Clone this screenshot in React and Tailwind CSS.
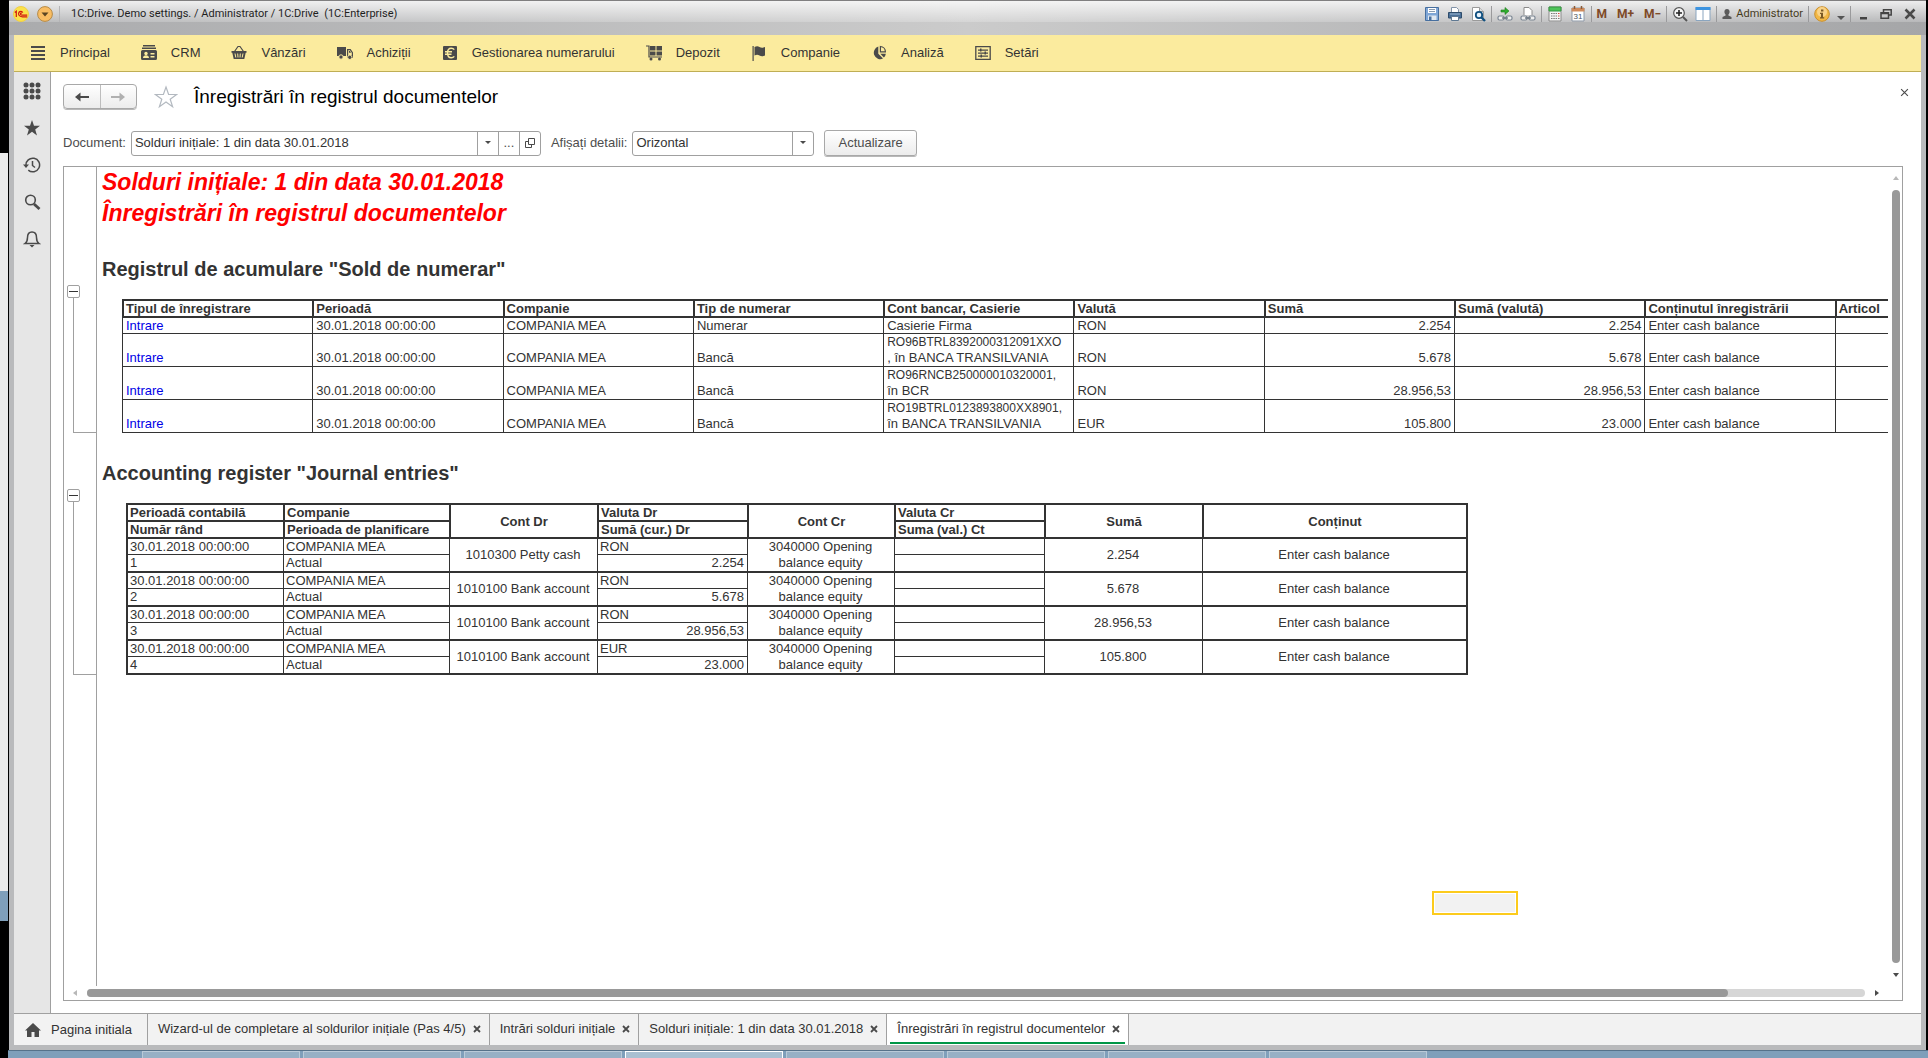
import React from 'react';

// --- Data ---

const menuItems = [
    { label: "Principal", icon: "lines" },
    { label: "CRM", icon: "card" },
    { label: "Vânzări", icon: "basket" },
    { label: "Achiziții", icon: "truck" },
    { label: "Gestionarea numerarului", icon: "euro" },
    { label: "Depozit", icon: "cart" },
    { label: "Companie", icon: "flag" },
    { label: "Analiză", icon: "pie" },
    { label: "Setări", icon: "sliders" },
];

const cashColumns = [
    "Tipul de înregistrare", "Perioadă", "Companie", "Tip de numerar", "Cont bancar, Casierie",
    "Valută", "Sumă", "Sumă (valută)", "Conținutul înregistrării", "Articol",
];

const cashRows = [
    { type: "Numerar", account: "Casierie Firma", currency: "RON", sum: "2.254", sumCur: "2.254" },
    { type: "Bancă", iban: "RO96BTRL8392000312091XXO", account: ", în BANCA TRANSILVANIA", currency: "RON", sum: "5.678", sumCur: "5.678" },
    { type: "Bancă", iban: "RO96RNCB250000010320001,", account: "în BCR", currency: "RON", sum: "28.956,53", sumCur: "28.956,53" },
    { type: "Bancă", iban: "RO19BTRL0123893800XX8901,", account: "în BANCA TRANSILVANIA", currency: "EUR", sum: "105.800", sumCur: "23.000" },
];

const journalRows = [
    { dr: "1010300 Petty cash", currency: "RON", sumCur: "2.254", sum: "2.254" },
    { dr: "1010100 Bank account", currency: "RON", sumCur: "5.678", sum: "5.678" },
    { dr: "1010100 Bank account", currency: "RON", sumCur: "28.956,53", sum: "28.956,53" },
    { dr: "1010100 Bank account", currency: "EUR", sumCur: "23.000", sum: "105.800" },
];

const tabs = [
    { label: "Wizard-ul de completare al soldurilor inițiale (Pas 4/5)" },
    { label: "Intrări solduri inițiale" },
    { label: "Solduri inițiale: 1 din data 30.01.2018" },
    { label: "Înregistrări în registrul documentelor", active: true },
];

// --- Icons ---

const menuIcons = {
    lines: <path d="M1 1h14v2H1zM1 5h14v2H1zM1 9h14v2H1zM1 13h14v2H1z" />,
    card: (
        <>
            <path d="M2 0h12v1.500H2zM1 2.500h14V4H1zM0 6.500Q0 5 1.500 5h13Q16 5 16 6.500v7q0 1.500-1.500 1.500h-13Q0 15 0 13.500z" />
            <g fill="#fbeb9e">
                <circle cx="5" cy="8.500" r="1.700" />
                <path d="M2 13c0-2 1.300-2.800 3-2.800S8 11 8 13zM9.500 8h4v1.500h-4zM9.500 11h4v1.500h-4z" />
            </g>
        </>
    ),
    basket: (
        <>
            <path d="M3.500 6.500 7 1.500h2l3.500 5" fill="none" stroke="#4a4a4a" strokeWidth="1.200" />
            <path d="M.5 6h15v1.800h-.8L13.300 14H2.700L1.300 7.800H.5z" />
            <path d="M4 8.500l.8 4M6.700 8.500l.300 4M9.300 8.500l-.3 4M12 8.500l-.8 4" stroke="#fbeb9e" strokeWidth="1" />
        </>
    ),
    truck: (
        <>
            <path d="M0 2h9v9H0z" />
            <path d="M10.600 4.600h2.700l2.100 3v4.800h-4.800z" fill="none" stroke="#4a4a4a" strokeWidth="1.200" />
            <path d="M12 6h1l1 1.800h-2zM10.500 10h5v2.500h-5z" />
            <circle cx="4" cy="12" r="2.200" stroke="#fbeb9e" />
            <circle cx="12.800" cy="12.300" r="2.200" stroke="#fbeb9e" />
        </>
    ),
    euro: (
        <>
            <path d="M1 2q0-1 1-1h12q1 0 1 1v12q0 1-1 1H2q-1 0-1-1z" />
            <path d="M12.300 4.600C11.500 3.600 10.600 3.200 9.300 3.200 7 3.200 5.500 5.200 5.500 8s1.500 4.800 3.800 4.800c1.300 0 2.200-.4 3-1.400M3 6.800h7M3 9.200h6.500" fill="none" stroke="#fbeb9e" strokeWidth="1.400" />
        </>
    ),
    cart: (
        <>
            <path d="M0 1h3v11h13" fill="none" stroke="#4a4a4a" strokeWidth="1.200" />
            <path d="M4 1h5.500v4.500H4zM10.500 1H16v4.500h-5.500zM4 6.500h5.500v4H4zM10.500 6.500H16v4h-5.500z" />
            <circle cx="5" cy="14" r="1.500" />
            <circle cx="13.500" cy="14" r="1.500" />
        </>
    ),
    flag: <path d="M1.500 1h1.200v15H1.500zM3.500 2c2-1 3.500-1 5 0s3.500 1 5.500 0v8.500c-2 1-4 1-5.500 0s-3-1.200-5 0z" />,
    pie: (
        <>
            <path d="M7.300 1.500v7.300l4.700 4.800A6.500 6.500 0 1 1 7.300 1.500z" />
            <path d="M9.400 1.500v5.300h5a5.400 5.400 0 0 0-5-5.300z" fill="none" stroke="#4a4a4a" strokeWidth="1.200" />
            <path d="M9.300 8.800h5.500a6 6 0 0 1-1.900 3.800z" />
        </>
    ),
    sliders: (
        <>
            <path d="M.8 1.700h14.400v12.600H.8z" fill="none" stroke="#4a4a4a" strokeWidth="1.300" />
            <path d="M3 4.500h10v1.200H3zM3 7.500h10v1.200H3zM3 10.500h10v1.200H3z" />
            <path d="M5 3.500h1.500v3H5zM9.500 6.500H11v3H9.500zM5.500 9.500H7v3H5.500z" />
        </>
    ),
};

const MenuIcon = ({ name }) => (
    <svg viewBox="0 0 16 16" className="w-4 h-4 shrink-0" fill="#4a4a4a">{menuIcons[name]}</svg>
);

const Triangle = ({ points, color }) => (
    <svg viewBox="0 0 6 6" className="w-1.5 h-1.5 shrink-0" fill={color}><polygon points={points} /></svg>
);

const CloseMark = ({ className, width }) => (
    <svg viewBox="0 0 8 8" className={className} fill="none" stroke="#4a4a4a" strokeWidth={width}>
        <path d="M1 1l6 6M7 1L1 7" />
    </svg>
);

const SaveIcon = () => (
    <svg viewBox="0 0 16 16" className="w-4 h-4">
        <path d="M1.500 1.500h13v13h-13z" fill="#7fa6d6" stroke="#476f9f" />
        <path d="M4 2h8v5H4z" fill="#fff" />
        <path d="M5 3.500h6M5 5.500h6" stroke="#8a9bb0" />
        <path d="M4 9.500h8.500V14H4z" fill="#dfe7f0" />
        <path d="M5 10.500h2.500V14H5z" fill="#476f9f" />
    </svg>
);

const PrintIcon = () => (
    <svg viewBox="0 0 16 16" className="w-4 h-4">
        <path d="M4.500 7V1.500h5l2 2V7z" fill="#fff" stroke="#8193a8" />
        <path d="M1.500 6.500h13V12h-13z" fill="#4a7099" stroke="#2e4c6b" />
        <path d="M3 8h10" stroke="#9fb9d3" />
        <path d="M4.500 10.500h7v4h-7z" fill="#fff" stroke="#5f7892" />
    </svg>
);

const PreviewIcon = () => (
    <svg viewBox="0 0 16 16" className="w-4 h-4">
        <path d="M2.500 1.500h7l4 4v9h-11z" fill="#fff" stroke="#9a9a9a" />
        <path d="M9.500 1.500v4h4" fill="#ddd" stroke="#9a9a9a" />
        <circle cx="9" cy="9" r="3.200" fill="#e8f2fa" stroke="#11507f" strokeWidth="1.800" />
        <path d="M11.500 11.500l3.500 3.500" stroke="#11507f" strokeWidth="2.400" />
    </svg>
);

const LinkIcon = ({ children }) => (
    <svg viewBox="0 0 16 16" className="w-4 h-4">
        {children}
        <rect x="1" y="10" width="6" height="4" rx="1.500" fill="#eee" stroke="#7c8794" strokeWidth="1.200" />
        <rect x="9" y="10" width="6" height="4" rx="1.500" fill="#eee" stroke="#7c8794" strokeWidth="1.200" />
        <path d="M5 12h6" stroke="#5d6874" strokeWidth="1.200" />
    </svg>
);

const CalculatorIcon = () => (
    <svg viewBox="0 0 16 16" className="w-4 h-4">
        <path d="M2 1h12v14H2z" fill="#f4f4f4" stroke="#8b8b8b" />
        <path d="M2 1h12v4H2z" fill="#4fc45a" stroke="#379642" />
        <path d="M4 7.500h6M4 10h6M4 12.500h6" stroke="#777" strokeDasharray="1.500 .8" />
        <path d="M11 7.500h1.500M11 10h1.500" stroke="#d9473a" />
        <path d="M11 12.500h1.500" stroke="#777" />
    </svg>
);

const CalendarIcon = () => (
    <svg viewBox="0 0 16 16" className="w-4 h-4">
        <path d="M2 2h12v13H2z" fill="#fff" stroke="#8d98a6" />
        <path d="M1.500 2h13v3.500h-13z" fill="#cf8a5b" />
        <path d="M4.500 0v3M11.500 0v3" stroke="#8d5a35" strokeWidth="1.500" />
        <text x="8" y="13" fontSize="8" textAnchor="middle" fill="#4a5560" fontFamily="Liberation Sans, sans-serif">31</text>
    </svg>
);

const ZoomIcon = () => (
    <svg viewBox="0 0 16 16" className="w-4 h-4">
        <circle cx="7" cy="7" r="5.300" fill="#f6f6f6" stroke="#555" strokeWidth="1.200" />
        <path d="M4 7h6M7 4v6" stroke="#222" strokeWidth="1.600" />
        <path d="M11 11l4 4" stroke="#555" strokeWidth="2" />
    </svg>
);

const PanelsIcon = () => (
    <svg viewBox="0 0 16 16" className="w-4 h-4">
        <path d="M1 1.500h14v13H1z" fill="#fff" stroke="#8aa5bf" />
        <path d="M.5 1h15v3H.5z" fill="#3d94e0" />
        <path d="M8 4v10.500" stroke="#8aa5bf" />
    </svg>
);

const UserIcon = () => (
    <svg viewBox="0 0 10 12" className="w-2.5 h-3" fill="#5b5b5b">
        <path d="M5 1c1.700 0 2.600 1.200 2.600 2.800C7.600 5 7.100 6 6.400 6.500v1L9.500 9v2h-9V9l3.100-1.500v-1C2.900 6 2.400 5 2.400 3.800 2.400 2.200 3.300 1 5 1z" />
    </svg>
);

const InfoIcon = () => (
    <svg viewBox="0 0 16 16" className="w-4 h-4">
        <circle cx="8" cy="8" r="7.300" fill="#f2b845" stroke="#c98f2c" />
        <circle cx="8" cy="6" r="5" fill="#f9d388" />
        <path d="M7 3.500h2.400v2H7zM6 6.800h3v4.400h1.200v1.300H6v-1.300h1V8H6z" fill="#7a5a26" />
    </svg>
);

// --- Window title ---

const Divider = () => <span className="w-px h-4 -mx-0.5 bg-[#9a9a9c]"></span>;

const ToolButton = ({ label, children }) => (
    <button type="button" aria-label={label} className="flex items-center justify-center h-4">{children}</button>
);

const TitleBar = () => (
    <header className="h-[35px] shrink-0 border-t border-[#807f80] bg-linear-to-r from-[#aaabad] via-[#cbcbcb] to-[#a5a6a8]">
        <div className="flex items-center justify-between h-[21px] px-1 bg-linear-to-b from-white/80 via-white/50 to-white/20 font-['Roboto',sans-serif] text-[11px] text-[#1f1f1f]">
            <div className="flex items-center pt-1">
                <svg viewBox="0 0 16 16" className="w-4 h-4" aria-hidden="true">
                    <circle cx="8" cy="8" r="7.500" fill="#fbe24b" stroke="#f0cf45" />
                    <path d="M1.800 6.500 3.300 5.300V11M9.800 6.600C9.200 5.400 8 5 6.800 5.600S5.200 8 6 9.300s2 1.500 3.500 1.500h4.700M9 7.300c-.8-.6-1.600-.2-1.500.8s.8 1.100 2 1.100h4.700" fill="none" stroke="#d3180f" strokeWidth="1.200" />
                </svg>
                <button type="button" aria-label="Meniu" className="ml-2">
                    <svg viewBox="0 0 16 16" className="w-4 h-4">
                        <circle cx="8" cy="8" r="7.400" fill="#f9bd63" stroke="#b58a48" />
                        <path d="M4.500 6.500h7L8 10.500z" fill="#5a4522" />
                    </svg>
                </button>
                <span className="w-px h-4 mx-1.5 bg-[#b5b5b7]"></span>
                <span className="ml-[5px] whitespace-pre">1C:Drive. Demo settings. / Administrator / 1C:Drive  (1C:Enterprise)</span>
            </div>
            <div className="flex items-center gap-[7px] pt-1">
                <ToolButton label="Salvare"><SaveIcon /></ToolButton>
                <ToolButton label="Tipărire"><PrintIcon /></ToolButton>
                <ToolButton label="Previzualizare"><PreviewIcon /></ToolButton>
                <Divider />
                <ToolButton label="Salt la link">
                    <LinkIcon><path d="M4 4h4V1.500L12 5 8 8.500V6H4z" fill="#2fae2f" stroke="#1d7a1d" strokeWidth=".6" /></LinkIcon>
                </ToolButton>
                <ToolButton label="Obținere link">
                    <LinkIcon><path d="M4 9V1.500h5L12 4.500V9" fill="#fff" stroke="#8a8a8a" /></LinkIcon>
                </ToolButton>
                <Divider />
                <ToolButton label="Calculator"><CalculatorIcon /></ToolButton>
                <ToolButton label="Calendar"><CalendarIcon /></ToolButton>
                <Divider />
                <div className="flex gap-2.5 font-bold text-xs text-[#7e4a28]">
                    <button type="button">M</button>
                    <button type="button">M+</button>
                    <button type="button">M−</button>
                </div>
                <Divider />
                <ToolButton label="Mărire"><ZoomIcon /></ToolButton>
                <ToolButton label="Panouri"><PanelsIcon /></ToolButton>
                <Divider />
                <button type="button" className="flex items-center gap-1 text-[#463b1c]">
                    <UserIcon />
                    Administrator
                </button>
                <Divider />
                <ToolButton label="Informații"><InfoIcon /></ToolButton>
                <ToolButton label="Opțiuni">
                    <svg viewBox="0 0 8 16" className="w-2 h-4" fill="#555"><path d="M0 10h8l-4 4z" /></svg>
                </ToolButton>
                <Divider />
                <div className="flex items-center gap-3 pl-1 pr-1.5">
                    <ToolButton label="Minimizare">
                        <svg viewBox="0 0 8 12" className="w-2 h-3" fill="#444"><path d="M0 9h7v2.500H0z" /></svg>
                    </ToolButton>
                    <ToolButton label="Restaurare">
                        <svg viewBox="0 0 12 12" className="w-3 h-3" fill="none" stroke="#444" strokeWidth="1.500">
                            <path d="M3.500 4V1.700h7.700V7H9M1 4.700h7.500v5.600H1zM1 5.500h7.500" />
                        </svg>
                    </ToolButton>
                    <ToolButton label="Închidere"><CloseMark className="w-3 h-3" width="1.700" /></ToolButton>
                </div>
            </div>
        </div>
    </header>
);

const MainMenu = () => (
    <nav className="flex items-center gap-[31px] h-[37px] shrink-0 pl-4 bg-[#fbeb9e] border-b border-[#bfae55]">
        {menuItems.map(item => (
            <a key={item.label} href="#" className="flex items-center gap-3.5 text-[#333]">
                <MenuIcon name={item.icon} />
                {item.label}
            </a>
        ))}
    </nav>
);

const SideBar = () => (
    <aside className="flex flex-col items-center gap-[19px] w-[37px] shrink-0 pt-2.5 bg-[#e6e6e6] border-r border-[#a0a0a0]">
        <button type="button" aria-label="Funcții">
            <svg viewBox="0 0 18 18" className="w-[18px] h-[18px]" fill="#4a4a4a">
                {[3, 9, 15].map(y => [3, 9, 15].map(x => <circle key={`${x}-${y}`} cx={x} cy={y} r="2.500" />))}
            </svg>
        </button>
        <button type="button" aria-label="Favorite">
            <svg viewBox="0 0 18 18" className="w-[18px] h-[18px]" fill="#4a4a4a">
                <path d="M9 1l2 5.700h6l-4.800 3.700 1.800 6L9 12.800 4 16.400l1.800-6L1 6.700h6z" />
            </svg>
        </button>
        <button type="button" aria-label="Istoric">
            <svg viewBox="0 0 18 18" className="w-[18px] h-[18px]" fill="none" stroke="#4a4a4a" strokeWidth="1.500">
                <path d="M3 9.500a6.800 6.800 0 1 1 2.300 4.600M9.500 5v4.500l2.500 2" />
                <path d="M0 8.500h6L3 12z" fill="#4a4a4a" stroke="none" />
            </svg>
        </button>
        <button type="button" aria-label="Căutare">
            <svg viewBox="0 0 18 18" className="w-[18px] h-[18px]" fill="none" stroke="#4a4a4a">
                <circle cx="7.500" cy="7" r="4.800" strokeWidth="1.600" />
                <path d="M11 11l5.500 5" strokeWidth="2.800" />
            </svg>
        </button>
        <button type="button" aria-label="Notificări">
            <svg viewBox="0 0 18 18" className="w-[18px] h-[18px]" fill="none" stroke="#4a4a4a" strokeWidth="1.500">
                <path d="M2 13.500c2-1.500 2.500-3 2.500-6C4.500 4 6.500 2 9 2s4.500 2 4.500 5.500c0 3 .5 4.500 2.500 6z" />
                <path d="M6.500 15h5L9 17.500z" fill="#4a4a4a" stroke="none" />
            </svg>
        </button>
    </aside>
);

// --- Form header ---

const FormHeader = () => (
    <div className="flex items-center">
        <div className="flex h-[25px] w-[74px] bg-linear-to-b from-white to-[#ececec] border border-[#a8a8a8] rounded-sm shadow-[0_1px_0_#b8b8b8]">
            <button type="button" aria-label="Înapoi" className="flex-1 flex items-center justify-center border-r border-[#bdbdbd]">
                <svg viewBox="0 0 16 12" className="w-4 h-3" fill="none" stroke="#4a4a4a" strokeWidth="2">
                    <path d="M15 6H3" /><path d="M6.500 1.500v9L1 6z" fill="#4a4a4a" stroke="none" />
                </svg>
            </button>
            <button type="button" aria-label="Înainte" className="flex-1 flex items-center justify-center">
                <svg viewBox="0 0 16 12" className="w-4 h-3" fill="none" stroke="#b0b0b0" strokeWidth="2">
                    <path d="M1 6h12" /><path d="M9.500 1.500v9L15 6z" fill="#b0b0b0" stroke="none" />
                </svg>
            </button>
        </div>
        <button type="button" aria-label="Adăugare la favorite" className="ml-[17px]">
            <svg viewBox="0 0 24 24" className="w-6 h-6" fill="none" stroke="#b3b9c0" strokeWidth="1.200">
                <path d="M12 2l2.600 7.500h8l-6.400 4.700 2.400 7.600-6.600-4.700-6.600 4.700 2.400-7.600L1.400 9.500h8z" />
            </svg>
        </button>
        <h1 className="ml-4 text-[19px] leading-6 text-black">Înregistrări în registrul documentelor</h1>
        <button type="button" aria-label="Închidere" className="ml-auto mb-2 -mr-1.5"><CloseMark className="w-[9px] h-[9px]" width="1" /></button>
    </div>
);

const FilterRow = () => (
    <div className="flex items-center h-[26px] mt-[21px] text-[#4d4d4d]">
        <label htmlFor="document">Document:</label>
        <div className="flex w-[410px] h-[25px] ml-[5px] border border-[#a0a0a0] rounded-[3px] bg-white">
            <input id="document" type="text" defaultValue="Solduri inițiale: 1 din data 30.01.2018" className="flex-1 min-w-0 px-[3px] text-[#333] outline-none" />
            <button type="button" aria-label="Listă" className="flex items-center justify-center w-[21px] border-l border-[#a0a0a0]">
                <Triangle points="0,1 6,1 3,4" color="#4a4a4a" />
            </button>
            <button type="button" className="w-[21px] border-l border-[#a0a0a0]">...</button>
            <button type="button" aria-label="Deschidere" className="flex items-center justify-center w-[21px] border-l border-[#a0a0a0]">
                <svg viewBox="0 0 10 10" className="w-2.5 h-2.5" fill="none" stroke="#4a4a4a"><path d="M3.500.5h6v6h-6zM3 3.500H.5v6h6V7" /></svg>
            </button>
        </div>
        <label htmlFor="details" className="ml-2.5">Afișați detalii:</label>
        <div className="flex w-[182px] h-[25px] ml-[5px] border border-[#a0a0a0] rounded-[3px] bg-white">
            <select id="details" className="flex-1 min-w-0 px-[3px] appearance-none text-[#333] outline-none">
                <option>Orizontal</option>
            </select>
            <span className="flex items-center justify-center w-[21px] border-l border-[#a0a0a0]">
                <Triangle points="0,1 6,1 3,4" color="#4a4a4a" />
            </span>
        </div>
        <button type="button" className="h-[26px] ml-2.5 px-[13px] bg-linear-to-b from-white to-[#ececec] border border-[#a8a8a8] rounded-[3px] shadow-[0_1px_0_#b8b8b8]">Actualizare</button>
    </div>
);

// --- Report sheet ---

const SheetRow = ({ group, className = "", children }) => (
    <div className={`flex ${className}`}>
        <div className="flex flex-col w-[33px] shrink-0 border-r border-[#a0a0a0]">
            {group && (
                <>
                    <button type="button" aria-label="Restrângere" className="flex items-center justify-center w-[13px] h-[13px] ml-[3px] border border-[#a0a0a0] rounded-[2px] bg-white">
                        <span className="w-[9px] h-px bg-[#333]"></span>
                    </button>
                    <div className="flex-1 ml-[9px] border-l border-b border-[#a0a0a0]"></div>
                </>
            )}
        </div>
        <div className="flex-1 min-w-0 overflow-hidden">{children}</div>
    </div>
);

const CashTable = () => (
    <table className="table-fixed w-[1903px] ml-[25px] mt-3.5 border-separate border-spacing-0 text-left leading-4 [&_th]:border-l-2 [&_th]:border-y-2 [&_th]:border-[#333] [&_th]:pl-0.5 [&_th]:leading-[15px] [&_td]:border-l [&_td]:border-b [&_td]:border-[#333] [&_td]:px-[3px] [&_td]:align-bottom">
        <thead>
            <tr>{cashColumns.map(name => <th key={name}>{name}</th>)}</tr>
        </thead>
        <tbody>
            {cashRows.map((row, index) => (
                <tr key={index} className={row.iban ? "" : "leading-[15px]"}>
                    <td><a href="#" className="text-[#0000e6]">Intrare</a></td>
                    <td>30.01.2018 00:00:00</td>
                    <td>COMPANIA MEA</td>
                    <td>{row.type}</td>
                    <td className="whitespace-nowrap">
                        {row.iban && <div className="text-xs leading-4">{row.iban}</div>}
                        <div>{row.account}</div>
                    </td>
                    <td>{row.currency}</td>
                    <td className="text-right">{row.sum}</td>
                    <td className="text-right">{row.sumCur}</td>
                    <td>Enter cash balance</td>
                    <td></td>
                </tr>
            ))}
        </tbody>
    </table>
);

const JournalTable = () => (
    <table className="table-fixed w-[1342px] ml-[29px] mt-3.5 border-separate border-spacing-0 border-r-2 border-t-2 border-[#333] text-left leading-[15px] [&_th]:border-l-2 [&_th]:border-b-2 [&_th]:border-[#333] [&_th]:px-0.5 [&_td]:border-l [&_td]:border-[#333] [&_td]:pl-0.5 [&_td]:pr-[3px]">
        <colgroup>
            <col className="w-[157px]" /><col className="w-[166px]" /><col className="w-[148px]" /><col className="w-[150px]" />
            <col className="w-[147px]" /><col className="w-[150px]" /><col className="w-[158px]" /><col />
        </colgroup>
        <thead>
            <tr>
                <th>Perioadă contabilă</th>
                <th>Companie</th>
                <th rowSpan={2} className="text-center">Cont Dr</th>
                <th>Valuta Dr</th>
                <th rowSpan={2} className="text-center">Cont Cr</th>
                <th>Valuta Cr</th>
                <th rowSpan={2} className="text-center">Sumă</th>
                <th rowSpan={2} className="text-center">Conținut</th>
            </tr>
            <tr>
                <th>Număr rând</th>
                <th>Perioada de planificare</th>
                <th>Sumă (cur.) Dr</th>
                <th>Suma (val.) Ct</th>
            </tr>
        </thead>
        <tbody>
            {journalRows.map((row, index) => (
                <React.Fragment key={index}>
                    <tr className="h-4">
                        <td className="border-b border-l-2!">30.01.2018 00:00:00</td>
                        <td className="border-b">COMPANIA MEA</td>
                        <td rowSpan={2} className="border-b-2 text-center leading-4 whitespace-nowrap">{row.dr}</td>
                        <td className="border-b">{row.currency}</td>
                        <td rowSpan={2} className="border-b-2 text-center leading-4">3040000 Opening<br />balance equity</td>
                        <td className="border-b"></td>
                        <td rowSpan={2} className="border-b-2 text-center leading-4">{row.sum}</td>
                        <td rowSpan={2} className="border-b-2 text-center leading-4">Enter cash balance</td>
                    </tr>
                    <tr className="h-[18px] leading-4">
                        <td className="border-b-2 border-l-2!">{index + 1}</td>
                        <td className="border-b-2">Actual</td>
                        <td className="border-b-2 text-right">{row.sumCur}</td>
                        <td className="border-b-2"></td>
                    </tr>
                </React.Fragment>
            ))}
        </tbody>
    </table>
);

const Sheet = () => (
    <div className="flex flex-col flex-1 min-h-0 mt-2.5 border border-[#a0a0a0] bg-white text-[#333]">
        <div className="flex flex-1 min-h-0">
            <div className="flex flex-col flex-1 min-w-0">
                <SheetRow>
                    <div className="pl-[5px] text-[23px] leading-[31px] font-bold italic text-[#f00]">
                        <p>Solduri inițiale: 1 din data 30.01.2018</p>
                        <p>Înregistrări în registrul documentelor</p>
                    </div>
                </SheetRow>
                <SheetRow>
                    <h2 className="pt-7 pb-1 pl-[5px] text-xl leading-6 font-bold">Registrul de acumulare "Sold de numerar"</h2>
                </SheetRow>
                <SheetRow group><CashTable /></SheetRow>
                <SheetRow>
                    <h2 className="pt-7 pb-1 pl-[5px] text-xl leading-6 font-bold">Accounting register "Journal entries"</h2>
                </SheetRow>
                <SheetRow group><JournalTable /></SheetRow>
                <SheetRow className="flex-1">
                    {/* selected cell */}
                    <div className="w-[86px] h-6 mt-[216px] ml-[1335px] border-2 border-[#fccb1d] bg-[#f2f2f2] shadow-[inset_0_0_0_1px_white]"></div>
                </SheetRow>
            </div>
            <div className="flex flex-col items-center w-3.5 shrink-0 pt-2 pb-2 pl-0.5">
                <Triangle points="3,1 6,5 0,5" color="#b8b8b8" />
                <div className="flex-1 w-2 my-[9px] rounded-full bg-[#999]"></div>
                <Triangle points="0,1 6,1 3,5" color="#4a4a4a" />
            </div>
        </div>
        <div className="flex items-center h-3.5 shrink-0 pl-2 pr-[22px]">
            <Triangle points="5,0 5,6 1,3" color="#b8b8b8" />
            <div className="flex-1 h-2 mx-[9px] rounded-full bg-[#d6d6d6]">
                <div className="w-12/13 h-2 rounded-full bg-[#999]"></div>
            </div>
            <Triangle points="1,0 1,6 5,3" color="#4a4a4a" />
        </div>
    </div>
);

// --- Bottom bars ---

const WindowTabs = () => (
    <footer className="flex h-8 shrink-0 border-t border-[#a0a0a0] bg-[#f2f2f2] text-[#333]">
        <a href="#" className="flex items-center gap-2.5 pl-[11px] pr-[15px] border-r border-[#a0a0a0]">
            <svg viewBox="0 0 16 14" className="w-4 h-3.5" fill="#4a4a4a"><path d="M8 0l8 7.500h-2V14h-4.500V9h-3v5H2V7.500H0z" /></svg>
            Pagina initiala
        </a>
        {tabs.map(tab => (
            <div key={tab.label} className={`px-[3px] pt-px border-r border-[#a0a0a0] ${tab.active ? "bg-white" : ""}`}>
                <div className={`flex items-center gap-[7px] h-[29px] pt-px pl-[7px] pr-[5px] border-b-2 ${tab.active ? "border-[#009646]" : "border-transparent"}`}>
                    <a href="#">{tab.label}</a>
                    <button type="button" aria-label="Închidere"><CloseMark className="w-2 h-2" width="1.800" /></button>
                </div>
            </div>
        ))}
    </footer>
);

const TaskBar = () => (
    <div className="flex gap-[3px] h-2 shrink-0 ml-2 pl-[134px] border-t border-[#56728a] bg-[#7f9fba]">
        {Array.from({ length: 8 }, (_, i) => (
            <span key={i} className={`w-[158px] border border-b-0 ${i === 3 ? "border-white bg-[#a9bfd1]" : "border-[#b9cad8] bg-[#97b0c5]"}`}></span>
        ))}
    </div>
);

export default function App() {
    return (
        <div className="flex flex-col h-screen overflow-hidden bg-black font-['Liberation_Sans',Arial,sans-serif] text-[13px] leading-4">
            <div className="flex flex-1 min-h-0">
                {/* edge of the windows behind */}
                <div className="flex flex-col w-2 shrink-0 pt-[153px] pb-[129px]">
                    <div className="flex-1 bg-[#ebebeb]"></div>
                    <div className="h-[30px] bg-[#7f9fba]"></div>
                </div>
                <div className="flex flex-col flex-1 min-w-0 ml-px mr-0.5 bg-[#b9babc]">
                    <TitleBar />
                    <div className="flex flex-col flex-1 min-h-0 mx-[5px] mb-[5px] bg-white">
                        <MainMenu />
                        <div className="flex flex-1 min-h-0">
                            <SideBar />
                            <main className="flex flex-col flex-1 min-w-0 pt-3 pl-3 pr-[18px] pb-3">
                                <FormHeader />
                                <FilterRow />
                                <Sheet />
                            </main>
                        </div>
                        <WindowTabs />
                    </div>
                </div>
            </div>
            <TaskBar />
        </div>
    );
}
